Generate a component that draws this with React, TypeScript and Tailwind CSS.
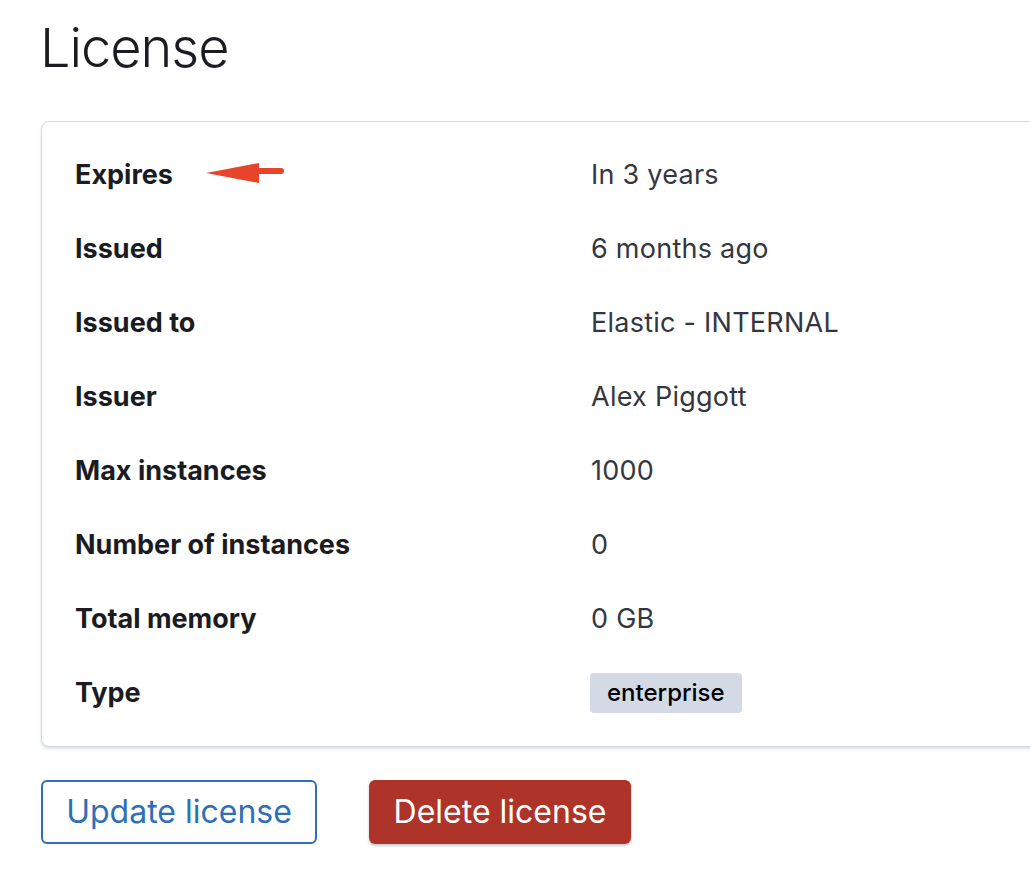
import React from "react";

const rows: [string, React.ReactNode][] = [
  ["Expires", "In 3 years"],
  ["Issued", "6 months ago"],
  ["Issued to", "Elastic - INTERNAL"],
  ["Issuer", "Alex Piggott"],
  ["Max instances", "1000"],
  ["Number of instances", "0"],
  ["Total memory", "0 GB"],
];

export default function App() {
  return (
    <div
      className="w-[1030px] h-[886px] overflow-hidden bg-white text-[#1a1c21]"
      style={{ fontFamily: "Inter, 'Noto Sans', sans-serif" }}
    >
      <div className="pl-[41px] pt-[14px]">
        <h1 className="text-[54px] leading-[68px] font-light tracking-[-1px] text-[#1a1c21] ml-[-1px]">License</h1>
        <div className="mt-[39px] w-[1100px] rounded-[8px] border border-[#d3dae6] shadow-[0_2px_3px_rgba(152,162,179,0.35)] bg-white pl-[33px] py-[16px]">
          {rows.map(([label, value], i) => (
            <div key={label} className="h-[74px] flex items-center">
              <div className="w-[516px] flex items-center text-[27px] font-bold">
                <span>{label}</span>
                {i === 0 && (
                  <svg width="80" height="24" viewBox="0 0 80 24" className="ml-[33px] mt-[-4px]">
                    <polygon points="0,12 53,2 53,22" fill="#e8432b" />
                    <line x1="50" y1="10" x2="75" y2="10" stroke="#e8432b" strokeWidth="6" strokeLinecap="round" />
                  </svg>
                )}
              </div>
              <div className="text-[27px] text-[#343741] tracking-[0.25px]">{value}</div>
            </div>
          ))}
          <div className="h-[74px] flex items-center">
            <div className="w-[516px] text-[27px] font-bold">Type</div>
            <div className="h-[40px] px-[17px] flex items-center rounded-[4px] bg-[#d3dae6] text-[24px] font-medium text-black ml-[-1px]">
              enterprise
            </div>
          </div>
        </div>
        <div className="mt-[33px] flex gap-[52px]">
          <button className="h-[64px] w-[276px] rounded-[6px] border-2 border-[#2f6fb8] text-[#2f6fb8] text-[32px] bg-white">
            Update license
          </button>
          <button className="h-[64px] w-[262px] rounded-[6px] bg-[#ae3429] text-white text-[32px] shadow-[0_2px_3px_rgba(0,0,0,0.2)]">
            Delete license
          </button>
        </div>
      </div>
    </div>
  );
}
